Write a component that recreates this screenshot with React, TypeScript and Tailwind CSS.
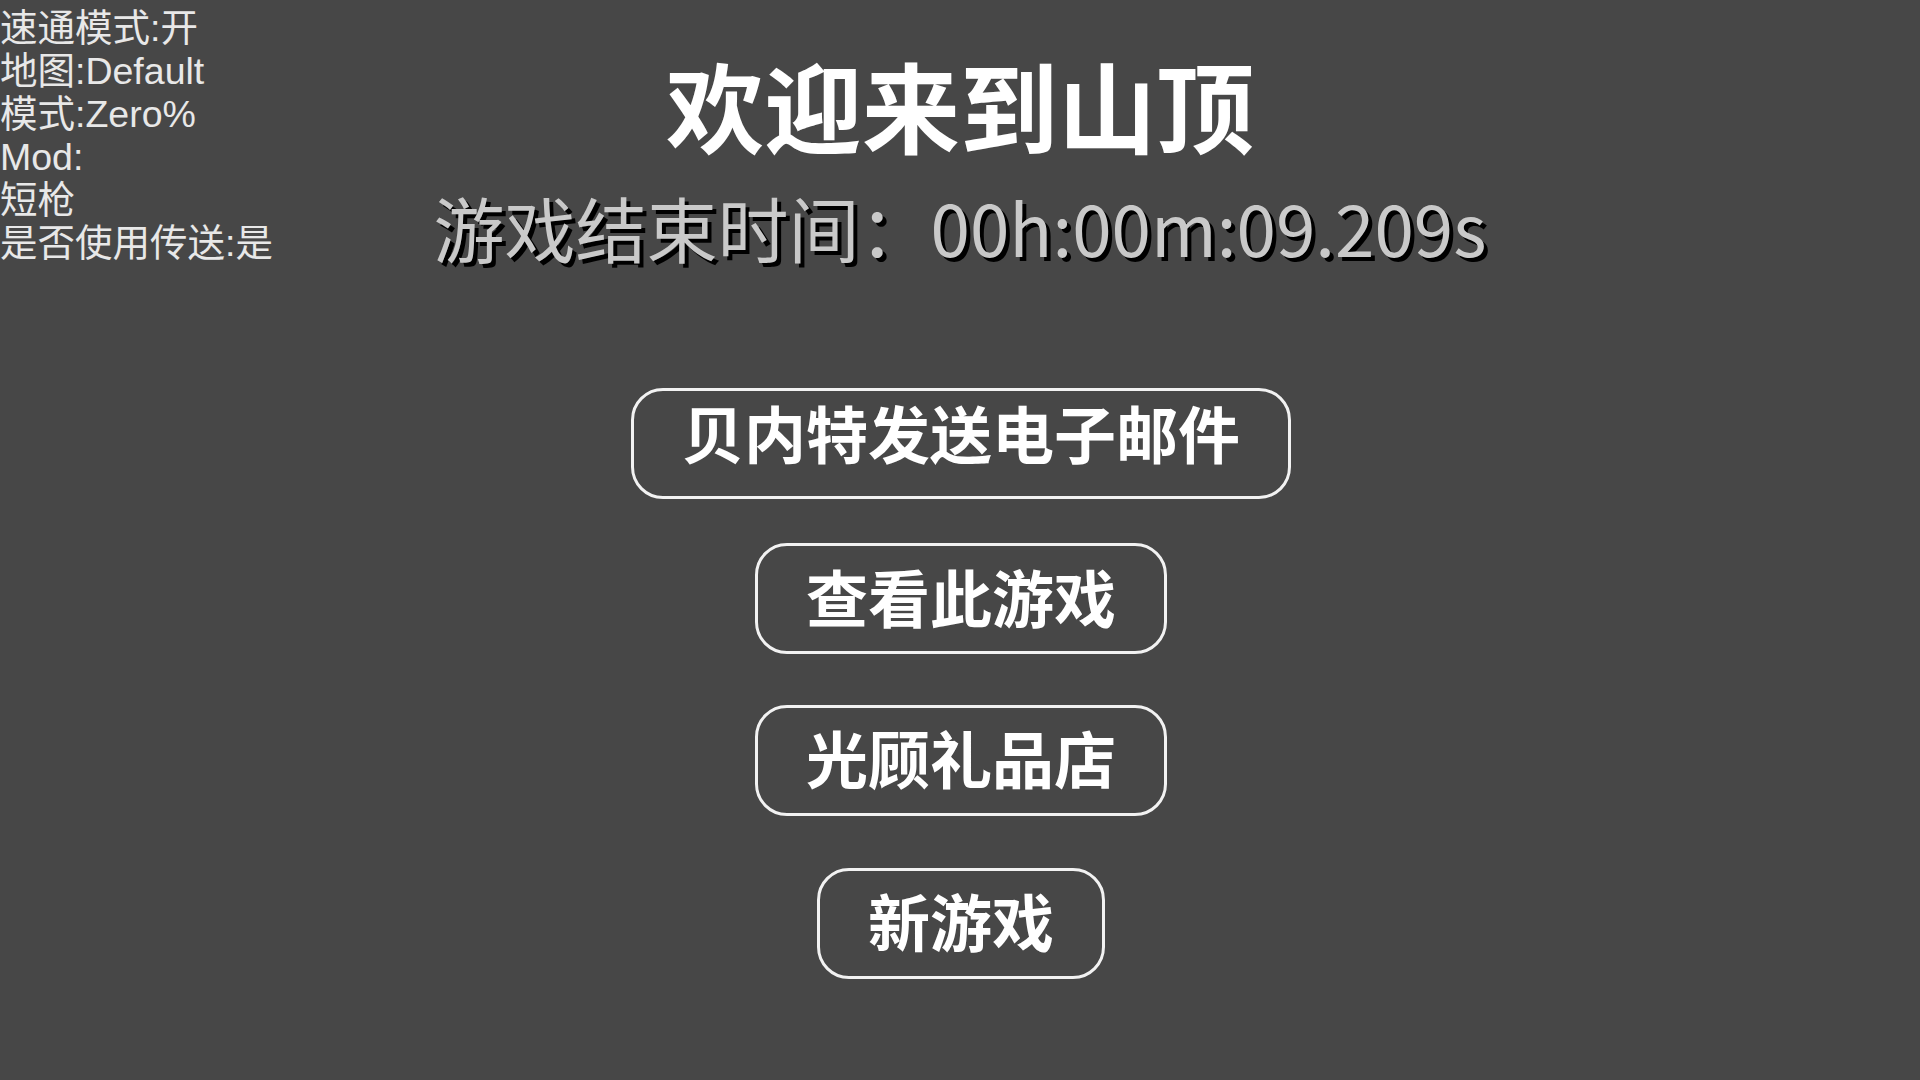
import React from "react";

const cjk = "font-['Noto_Sans_CJK_SC',sans-serif]";

function MenuButton({ label, shift }: { label: string; shift: string }) {
  return (
    <button
      className={`box-border flex h-[111px] items-center justify-center rounded-[32px] border-[3px] border-[#f2f2f2] bg-transparent px-[48px] ${shift} ${cjk} text-[62px] font-bold leading-[62px] text-white`}
    >
      {label}
    </button>
  );
}

export default function App() {
  const hud = ["速通模式:开", "地图:Default", "模式:Zero%", "Mod:", "短枪", "是否使用传送:是"];
  return (
    <div className="relative h-[1080px] w-full overflow-hidden bg-[#474747]">
      <div className="absolute left-0 top-0 pt-[7px] font-['Liberation_Sans','Noto_Sans_CJK_SC',sans-serif] text-[37.5px] leading-[43px] text-[#e8e8e8]">
        {hud.map((l) => (
          <div key={l}>{l}</div>
        ))}
      </div>

      <div className="flex flex-col items-center pt-[54px]">
        <h1 className={`${cjk} text-[98px] font-bold leading-[98px] text-white`}>欢迎来到山顶</h1>
        <div
          className={`mt-[38px] ${cjk} text-[71px] font-normal leading-[72px] text-[#c9c9c9] [text-shadow:4px_4px_0_#000]`}
        >
          游戏结束时间：00h:00m:09.209s
        </div>

        <div className="ml-[2px] mt-[126px]">
          <MenuButton label="贝内特发送电子邮件" shift="pb-[24px]" />
        </div>
        <div className="ml-[2px] mt-[44px]">
          <MenuButton label="查看此游戏" shift="pb-[6px]" />
        </div>
        <div className="ml-[2px] mt-[51px]">
          <MenuButton label="光顾礼品店" shift="pb-[8px]" />
        </div>
        <div className="ml-[2px] mt-[52px]">
          <MenuButton label="新游戏" shift="pb-[8px]" />
        </div>
      </div>
    </div>
  );
}
